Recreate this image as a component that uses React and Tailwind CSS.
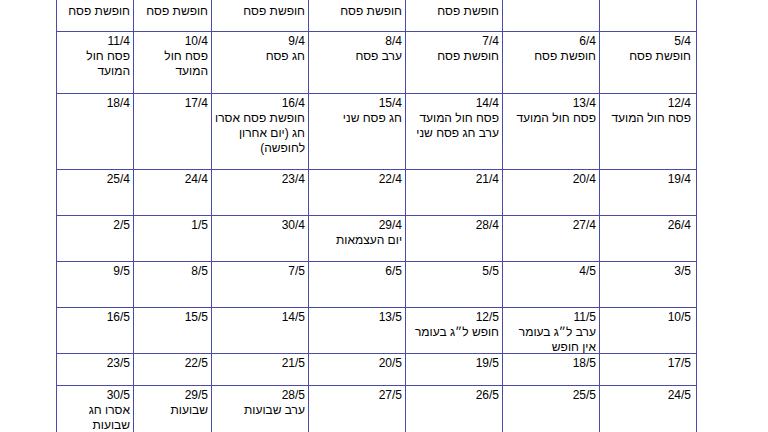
import { memo } from 'react';

// Rows are listed right-to-left (first cell = rightmost column)
const ROWS = [
  { h: 'h-[32px]', top: true, cells: [[], [], ['חופשת פסח'], ['חופשת פסח'], ['חופשת פסח'], ['חופשת פסח'], ['חופשת פסח']] },
  {
    h: 'h-[62px]',
    cells: [
      ['5/4', 'חופשת פסח'],
      ['6/4', 'חופשת פסח'],
      ['7/4', 'חופשת פסח'],
      ['8/4', 'ערב פסח'],
      ['9/4', 'חג פסח'],
      ['10/4', 'פסח חול', 'המועד'],
      ['11/4', 'פסח חול', 'המועד'],
    ],
  },
  {
    h: 'h-[76px]',
    cells: [
      ['12/4', 'פסח חול המועד'],
      ['13/4', 'פסח חול המועד'],
      ['14/4', 'פסח חול המועד', 'ערב חג פסח שני'],
      ['15/4', 'חג פסח שני'],
      ['16/4', 'חופשת פסח אסרו', 'חג (יום אחרון', 'לחופשה)'],
      ['17/4'],
      ['18/4'],
    ],
  },
  { h: 'h-[46px]', cells: [['19/4'], ['20/4'], ['21/4'], ['22/4'], ['23/4'], ['24/4'], ['25/4']] },
  {
    h: 'h-[46px]',
    cells: [['26/4'], ['27/4'], ['28/4'], ['29/4', 'יום העצמאות'], ['30/4'], ['1/5'], ['2/5']],
  },
  { h: 'h-[46px]', cells: [['3/5'], ['4/5'], ['5/5'], ['6/5'], ['7/5'], ['8/5'], ['9/5']] },
  {
    h: 'h-[46px]',
    cells: [
      ['10/5'],
      ['11/5', 'ערב ל״ג בעומר', 'אין חופש'],
      ['12/5', 'חופש ל״ג בעומר'],
      ['13/5'],
      ['14/5'],
      ['15/5'],
      ['16/5'],
    ],
  },
  { h: 'h-[32px]', cells: [['17/5'], ['18/5'], ['19/5'], ['20/5'], ['21/5'], ['22/5'], ['23/5']] },
  {
    h: 'h-[62px]',
    cells: [
      ['24/5'],
      ['25/5'],
      ['26/5'],
      ['27/5'],
      ['28/5', 'ערב שבועות'],
      ['29/5', 'שבועות'],
      ['30/5', 'אסרו חג', 'שבועות'],
    ],
  },
];

const CalendarCell = memo(({ lines, top, height, edge }) => (
  <div
    className={`${height} border-l border-b border-[#4a4aa8] ${edge ? 'pr-[5px]' : 'pr-[3px]'} ${
      top ? 'pt-[4px]' : 'pt-[2px]'
    } text-right overflow-visible`}
  >
    {lines.map((line, i) => (
      <div key={i} className="whitespace-nowrap">
        {line}
      </div>
    ))}
  </div>
));

CalendarCell.displayName = 'CalendarCell';

export default function App() {
  return (
    <div
      className="w-[768px] h-[432px] overflow-hidden bg-white text-black text-[12px] leading-[15px]"
      style={{ fontFamily: '"Liberation Sans", Arial, "DejaVu Sans", sans-serif' }}
    >
      <div
        dir="rtl"
        className="ml-[56px] w-[641px] grid grid-cols-[97px_97px_97px_97px_97px_78px_77px] border-r border-[#4a4aa8]"
      >
        {ROWS.map((row, r) =>
          row.cells.map((lines, c) => (
            <CalendarCell key={`${r}-${c}`} lines={lines} top={row.top} height={row.h} edge={c === 0} />
          ))
        )}
      </div>
    </div>
  );
}
